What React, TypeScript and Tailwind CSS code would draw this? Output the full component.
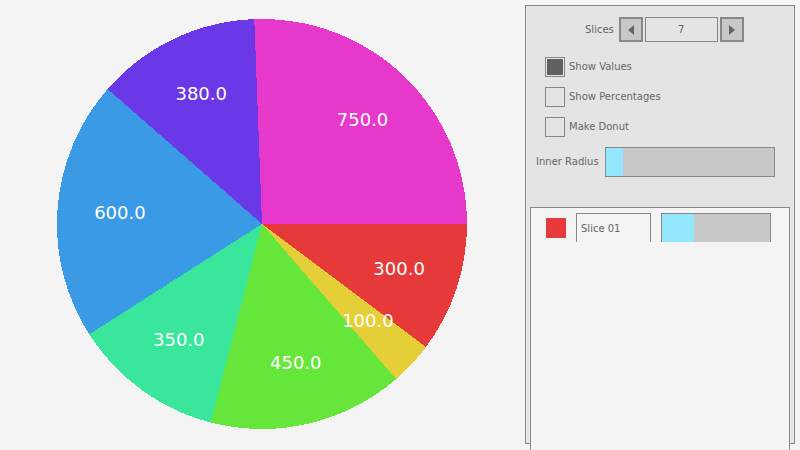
import React from "react";

const data = [
  { v: 300, c: "#e63a3a" },
  { v: 100, c: "#e5cf39" },
  { v: 450, c: "#66e63a" },
  { v: 350, c: "#3ae69b" },
  { v: 600, c: "#3a9ae6" },
  { v: 380, c: "#6a38e6" },
  { v: 750, c: "#e639cc" },
];

function Pie() {
  const cx = 262;
  const cy = 224;
  const r = 205;
  const total = data.reduce((s, d) => s + d.v, 0);
  let acc = 0;
  const slices = data.map((d) => {
    const a0 = (acc / total) * Math.PI * 2;
    acc += d.v;
    const a1 = (acc / total) * Math.PI * 2;
    const x0 = cx + r * Math.cos(a0);
    const y0 = cy + r * Math.sin(a0);
    const x1 = cx + r * Math.cos(a1);
    const y1 = cy + r * Math.sin(a1);
    const large = a1 - a0 > Math.PI ? 1 : 0;
    const mid = (a0 + a1) / 2;
    return {
      path: `M ${cx} ${cy} L ${x0} ${y0} A ${r} ${r} 0 ${large} 1 ${x1} ${y1} Z`,
      lx: cx + r * 0.7 * Math.cos(mid) + 1,
      ly: cy + r * 0.7 * Math.sin(mid) - 1,
      c: d.c,
      label: d.v.toFixed(1),
    };
  });
  return (
    <svg width="525" height="450" viewBox="0 0 525 450" className="block">
      {slices.map((s, i) => (
        <path key={i} d={s.path} fill={s.c} shapeRendering="crispEdges" />
      ))}
      {slices.map((s, i) => (
        <text
          key={"t" + i}
          x={s.lx}
          y={s.ly}
          fill="#ffffff"
          textAnchor="middle"
          dominantBaseline="central"
          fontFamily="'DejaVu Sans', sans-serif"
          fontSize="18"
        >
          {s.label}
        </text>
      ))}
    </svg>
  );
}

function Checkbox({ checked, label }: { checked?: boolean; label: string }) {
  return (
    <div className="flex items-center h-[20px]">
      <div className="w-[20px] h-[20px] border border-[#888888] bg-[#e4e4e4] p-[1px] box-border">
        {checked ? <div className="w-full h-full bg-[#606060]" /> : null}
      </div>
      <span className="ml-[4px] text-[10px] leading-none text-[#666666]">{label}</span>
    </div>
  );
}

export default function App() {
  return (
    <div
      className="w-[800px] h-[450px] overflow-hidden bg-[#f4f4f4] flex"
      style={{ fontFamily: "'DejaVu Sans', sans-serif" }}
    >
      <div className="w-[525px] h-[450px] shrink-0">
        <Pie />
      </div>
      <div className="mt-[5px] w-[270px] h-[439px] border border-[#888888] bg-[#e4e4e4] shrink-0 flex flex-col">
        {/* Slices row */}
        <div className="flex items-center mt-[11px] ml-[59px] h-[25px]">
          <span className="text-[10px] leading-none text-[#666666]">Slices</span>
          <div className="ml-[5px] w-[24px] h-[25px] border-2 border-[#888888] bg-[#c8c8c8] flex items-center justify-center">
            <div className="w-0 h-0 border-y-[5.5px] border-y-transparent border-r-[6px] border-r-[#666666]" />
          </div>
          <div className="ml-[2px] w-[73px] h-[25px] border border-[#888888] bg-[#e4e4e4] flex items-center justify-center text-[10px] text-[#666666]">
            7
          </div>
          <div className="ml-[2px] w-[24px] h-[25px] border-2 border-[#888888] bg-[#c8c8c8] flex items-center justify-center">
            <div className="w-0 h-0 border-y-[5.5px] border-y-transparent border-l-[6px] border-l-[#666666]" />
          </div>
        </div>

        {/* Checkboxes */}
        <div className="flex flex-col gap-[10px] mt-[15px] ml-[19px]">
          <Checkbox checked label="Show Values" />
          <Checkbox label="Show Percentages" />
          <Checkbox label="Make Donut" />
        </div>

        {/* Inner radius */}
        <div className="flex items-center mt-[10px] ml-[10px]">
          <span className="text-[10px] leading-none text-[#666666] w-[69px]">Inner Radius</span>
          <div className="w-[170px] h-[30px] border border-[#888888] bg-[#c8c8c8] flex">
            <div className="w-[17px] h-full bg-[#94e6fc]" />
          </div>
        </div>

        {/* Separator */}
        <div className="mt-[10px] ml-[9px] w-[250px] h-px bg-[#9eaab0]" />

        {/* List panel */}
        <div className="mt-[20px] ml-[4px] w-[260px] h-[260px] shrink-0 border border-[#888888] bg-[#f4f4f4] relative">
          <div className="flex items-start pl-[15px]">
            <div className="mt-[10px] w-[20px] h-[20px] bg-[#e63a3a]" />
            <div className="mt-[5px] ml-[10px] w-[75px] h-[29px] border border-b-0 border-[#888888] bg-[#f4f4f4] flex items-center pl-[4px] text-[10px] text-[#666666]">
              Slice 01
            </div>
            <div className="mt-[5px] ml-[10px] w-[110px] h-[29px] border border-b-0 border-[#888888] bg-[#c8c8c8] flex">
              <div className="w-[32px] h-full bg-[#94e6fc]" />
            </div>
          </div>
        </div>
      </div>
    </div>
  );
}
